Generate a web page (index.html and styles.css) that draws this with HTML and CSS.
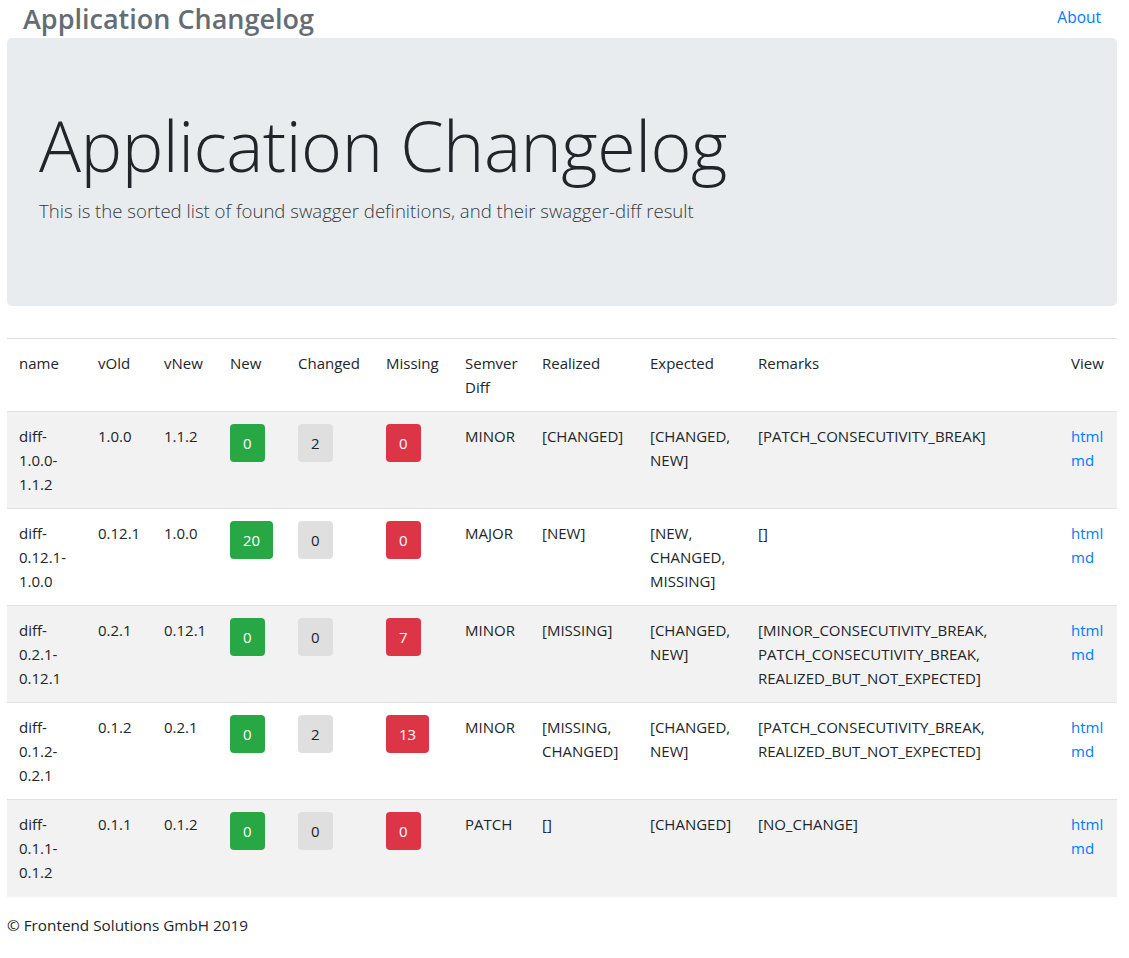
FILE: index.html
```html
<!DOCTYPE html>
<html lang="en">
<head>
<meta charset="utf-8">
<title>Application Changelog</title>
<link rel="stylesheet" href="styles.css">
</head>
<body>
<div class="page">
  <header class="topbar">
    <span class="brand">Application Changelog</span>
    <a class="nav-link" href="#">About</a>
  </header>
  <section class="jumbotron">
    <h1 class="display">Application Changelog</h1>
    <p class="lead">This is the sorted list of found swagger definitions, and their swagger-diff result</p>
  </section>
  <table class="changes">
    <colgroup>
      <col class="c-name"><col class="c-old"><col class="c-new"><col class="c-cnt-new"><col class="c-cnt-chg"><col class="c-cnt-mis"><col class="c-semver"><col class="c-real"><col class="c-exp"><col class="c-rem"><col class="c-view">
    </colgroup>
    <thead>
      <tr><th>name</th><th>vOld</th><th>vNew</th><th>New</th><th>Changed</th><th>Missing</th><th>Semver Diff</th><th>Realized</th><th>Expected</th><th>Remarks</th><th>View</th></tr>
    </thead>
    <tbody>
      <tr>
        <td>diff-1.0.0-1.1.2</td><td class="ver">1.0.0</td><td class="ver">1.1.2</td>
        <td><span class="pill pill-new">0</span></td><td><span class="pill pill-chg">2</span></td><td><span class="pill pill-mis">0</span></td>
        <td>MINOR</td><td>[CHANGED]</td><td>[CHANGED, NEW]</td><td>[PATCH_CONSECUTIVITY_BREAK]</td>
        <td><a href="#">html</a><br><a href="#">md</a></td>
      </tr>
      <tr>
        <td>diff-0.12.1-1.0.0</td><td class="ver">0.12.1</td><td class="ver">1.0.0</td>
        <td><span class="pill pill-new">20</span></td><td><span class="pill pill-chg">0</span></td><td><span class="pill pill-mis">0</span></td>
        <td>MAJOR</td><td>[NEW]</td><td>[NEW, CHANGED, MISSING]</td><td>[]</td>
        <td><a href="#">html</a><br><a href="#">md</a></td>
      </tr>
      <tr>
        <td>diff-0.2.1-0.12.1</td><td class="ver">0.2.1</td><td class="ver">0.12.1</td>
        <td><span class="pill pill-new">0</span></td><td><span class="pill pill-chg">0</span></td><td><span class="pill pill-mis">7</span></td>
        <td>MINOR</td><td>[MISSING]</td><td>[CHANGED, NEW]</td><td>[MINOR_CONSECUTIVITY_BREAK, PATCH_CONSECUTIVITY_BREAK, REALIZED_BUT_NOT_EXPECTED]</td>
        <td><a href="#">html</a><br><a href="#">md</a></td>
      </tr>
      <tr>
        <td>diff-0.1.2-0.2.1</td><td class="ver">0.1.2</td><td class="ver">0.2.1</td>
        <td><span class="pill pill-new">0</span></td><td><span class="pill pill-chg">2</span></td><td><span class="pill pill-mis">13</span></td>
        <td>MINOR</td><td>[MISSING, CHANGED]</td><td>[CHANGED, NEW]</td><td>[PATCH_CONSECUTIVITY_BREAK, REALIZED_BUT_NOT_EXPECTED]</td>
        <td><a href="#">html</a><br><a href="#">md</a></td>
      </tr>
      <tr>
        <td>diff-0.1.1-0.1.2</td><td class="ver">0.1.1</td><td class="ver">0.1.2</td>
        <td><span class="pill pill-new">0</span></td><td><span class="pill pill-chg">0</span></td><td><span class="pill pill-mis">0</span></td>
        <td>PATCH</td><td>[]</td><td>[CHANGED]</td><td>[NO_CHANGE]</td>
        <td><a href="#">html</a><br><a href="#">md</a></td>
      </tr>
    </tbody>
  </table>
  <footer class="foot">© Frontend Solutions GmbH 2019</footer>
</div>
</body>
</html>
```
FILE: styles.css
```css
* { box-sizing: border-box; }
html, body { margin: 0; padding: 0; background: #fff; }
body {
  font-family: "Open Sans", "Noto Sans", "Liberation Sans", sans-serif;
  font-size: 15px;
  line-height: 24px;
  color: #212529;
}
a { color: #007bff; text-decoration: none; }
.page { width: 1110px; margin-left: 7px; }
.topbar {
  height: 38px;
  display: flex;
  justify-content: space-between;
  align-items: flex-start;
  padding: 0 16px 0 16px;
}
.brand {
  font-size: 27px;
  font-weight: 600;
  line-height: 37px;
  color: #646d74;
}
.nav-link { font-size: 15.5px; margin-top: 5px; }
.jumbotron {
  background: #e9ecef;
  border-radius: 5px;
  padding: 64px 32px;
  margin-bottom: 32px;
}
.display {
  margin: 0 0 8px;
  font-size: 70px;
  font-weight: 300;
  line-height: 86px;
  letter-spacing: -0.5px;
}
.lead {
  margin: 0 0 16px;
  font-size: 18.6px;
  font-weight: 300;
  line-height: 30px;
  color: #343a40;
}
.changes {
  width: 1110px;
  border-collapse: collapse;
  table-layout: fixed;
}
.c-name { width: 79px; } .c-old { width: 66px; } .c-new { width: 66px; }
.c-cnt-new { width: 68px; } .c-cnt-chg { width: 88px; } .c-cnt-mis { width: 79px; }
.c-semver { width: 77px; } .c-real { width: 108px; } .c-exp { width: 108px; }
.c-rem { width: 313px; } .c-view { width: 58px; }
.changes th, .changes td {
  padding: 12px;
  text-align: left;
  vertical-align: top;
  border-top: 1px solid #dee2e6;
  font-weight: 400;
  word-wrap: break-word;
}
.changes td.ver { white-space: nowrap; }
.changes thead th { height: 73px; }
.changes tbody td { height: 97px; }
.changes tbody tr:nth-child(odd) { background: #f2f2f2; }
.changes tbody tr:last-child td { border-bottom: 0; }
.pill {
  display: inline-block;
  padding: 7px 13px;
  border-radius: 4px;
  line-height: 24px;
}
.pill-new { background: #28a745; color: #fff; }
.pill-chg { background: #dfdfdf; color: #212529; }
.pill-mis { background: #dc3545; color: #fff; }
.foot { padding-top: 16px; font-size: 15.3px; }
```
